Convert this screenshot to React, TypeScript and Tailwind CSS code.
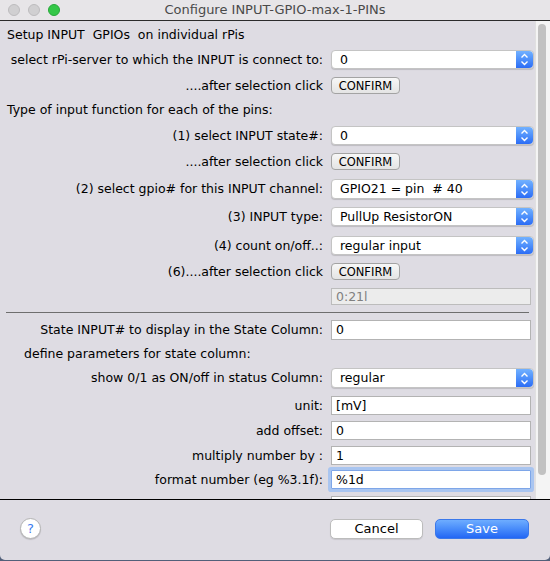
import React from "react";

const FONT = { fontFamily: '"DejaVu Sans", "Liberation Sans", sans-serif' };

const Stepper = () => (
  <div className="w-[17px] h-full rounded-r-[4px] bg-gradient-to-b from-[#72b1ff] to-[#2c6cf5] flex items-center justify-center">
    <svg width="9" height="13" viewBox="0 0 9 13" fill="none" stroke="white" strokeWidth="1.4">
      <path d="M1.5 4.5 L4.5 1.5 L7.5 4.5" />
      <path d="M1.5 8.5 L4.5 11.5 L7.5 8.5" />
    </svg>
  </div>
);

const Select = ({ value, h = "h-[19px]" }: { value: string; h?: string }) => (
  <div
    className={`${h} w-[203px] rounded-[4px] bg-white border border-[#c4c4c4] shadow-[0_1px_1px_rgba(0,0,0,0.15)] flex items-stretch`}
  >
    <div className="flex-1 pl-[8px] flex items-center text-black whitespace-pre">{value}</div>
    <Stepper />
  </div>
);

const Field = ({
  value,
  disabled,
  focused,
  h = "h-[19px]",
}: {
  value: string;
  disabled?: boolean;
  focused?: boolean;
  h?: string;
}) => (
  <div
    className={`${h} w-[200px] flex items-center pl-[4px] border ${
      disabled
        ? "bg-[#ececec] border-[#bcbcbc] text-[#808080]"
        : focused
        ? "bg-white border-[#7ea6e8] ring-[3px] ring-[#a9c5f0] rounded-[1px] text-black"
        : "bg-white border-[#b3b3b3] text-black"
    }`}
  >
    {value}
  </div>
);

const Confirm = () => (
  <div className="h-[17px] w-[69px] rounded-[4px] border border-[#a3a3a3] bg-gradient-to-b from-[#f7f7f7] to-[#e4e4e4] flex items-center justify-center text-[11.5px] text-black">
    CONFIRM
  </div>
);

const Row = ({
  label,
  mt,
  children,
}: {
  label: string;
  mt: string;
  children: React.ReactNode;
}) => (
  <div className={`flex items-center shrink-0 ${mt}`}>
    <div className="w-[323px] text-right whitespace-pre shrink-0">{label}</div>
    <div className="ml-[8px]">{children}</div>
  </div>
);

export default function App() {
  return (
    <div className="w-[550px] h-[561px] bg-[#52607a] text-[12.5px] leading-[16px] text-black" style={FONT}>
      <div className="h-[560px] bg-[#dedce3] rounded-b-[5px] flex flex-col overflow-hidden">
        {/* title bar */}
        <div className="h-[21px] bg-[#e7e5e8] border-b border-[#2b2b2b] flex items-center relative shrink-0">
          <div className="flex items-center gap-[8px] pl-[8px]">
            <span className="w-[12px] h-[12px] rounded-full bg-[#d0cfd1] border border-[#bdbcbe]" />
            <span className="w-[12px] h-[12px] rounded-full bg-[#d0cfd1] border border-[#bdbcbe]" />
            <span className="w-[12px] h-[12px] rounded-full bg-[#34c748] border border-[#27a83a]" />
          </div>
          <div className="absolute inset-0 flex items-center justify-center text-[13px] text-[#4a4a4a]">
            Configure INPUT-GPIO-max-1-PINs
          </div>
        </div>

        {/* content + scrollbar */}
        <div className="h-[478px] flex shrink-0 overflow-hidden">
          <div className="flex-1 flex flex-col overflow-hidden">
            <div className="mt-[6px] h-[16px] pl-[7px] flex items-center whitespace-pre shrink-0">
              Setup INPUT  GPIOs  on individual rPis
            </div>
            <Row label="select rPi-server to which the INPUT is connect to:" mt="mt-[7px]">
              <Select value="0" />
            </Row>
            <Row label="....after selection click" mt="mt-[8px]">
              <Confirm />
            </Row>
            <div className="mt-[8px] h-[16px] pl-[7px] flex items-center shrink-0">
              Type of input function for each of the pins:
            </div>
            <Row label="(1) select INPUT state#:" mt="mt-[8px]">
              <Select value="0" />
            </Row>
            <Row label="....after selection click" mt="mt-[8px]">
              <Confirm />
            </Row>
            <Row label="(2) select gpio# for this INPUT channel:" mt="mt-[9px]">
              <Select value="GPIO21 = pin  # 40" h="h-[20px]" />
            </Row>
            <Row label="(3) INPUT type:" mt="mt-[8px]">
              <Select value="PullUp ResistorON" />
            </Row>
            <Row label="(4) count on/off..:" mt="mt-[10px]">
              <Select value="regular input" />
            </Row>
            <Row label="(6)....after selection click" mt="mt-[8px]">
              <Confirm />
            </Row>
            <Row label="" mt="mt-[8px]">
              <Field value="0:21l" disabled h="h-[17px]" />
            </Row>
            <div className="mt-[7px] ml-[6px] w-[523px] h-px bg-[#6e6e6e] shrink-0" />
            <Row label="State INPUT# to display in the State Column:" mt="mt-[7px]">
              <Field value="0" h="h-[20px]" />
            </Row>
            <div className="mt-[6px] h-[16px] pl-[24px] flex items-center shrink-0">
              define parameters for state column:
            </div>
            <Row label="show 0/1 as ON/off in status Column:" mt="mt-[6px]">
              <Select value="regular" h="h-[20px]" />
            </Row>
            <Row label="unit:" mt="mt-[8px]">
              <Field value="[mV]" />
            </Row>
            <Row label="add offset:" mt="mt-[6px]">
              <Field value="0" />
            </Row>
            <Row label="multiply number by :" mt="mt-[6px]">
              <Field value="1" />
            </Row>
            <Row label="format number (eg %3.1f):" mt="mt-[5px]">
              <Field value="%1d" focused h="h-[19px]" />
            </Row>
            <Row label="" mt="mt-[7px]">
              <Field value="" />
            </Row>
          </div>
          <div className="w-[15px] bg-[#f4f4f4] border-l border-[#e0e0e0] pt-[3px] pl-[2px]">
            <div className="w-[8px] h-[451px] rounded-full bg-[#c1c1c1]" />
          </div>
        </div>

        {/* footer */}
        <div className="flex-1 border-t border-black flex items-center pb-[3px]">
          <div className="ml-[20px] w-[21px] h-[21px] rounded-full bg-white border border-[#b4b4b4] shadow-[0_1px_1px_rgba(0,0,0,0.15)] flex items-center justify-center text-[13px] text-[#3b7cf0]">
            ?
          </div>
          <div className="ml-auto mr-[21px] flex items-center gap-[12px]">
            <div className="w-[93px] h-[20px] rounded-[5px] bg-white border border-[#bcbcbc] shadow-[0_1px_1px_rgba(0,0,0,0.1)] flex items-center justify-center text-[13px]">
              Cancel
            </div>
            <div className="w-[94px] h-[20px] rounded-[5px] bg-gradient-to-b from-[#6eadff] to-[#2366f4] border border-[#3b78ea] flex items-center justify-center text-[13px] text-white">
              Save
            </div>
          </div>
        </div>
      </div>
    </div>
  );
}
